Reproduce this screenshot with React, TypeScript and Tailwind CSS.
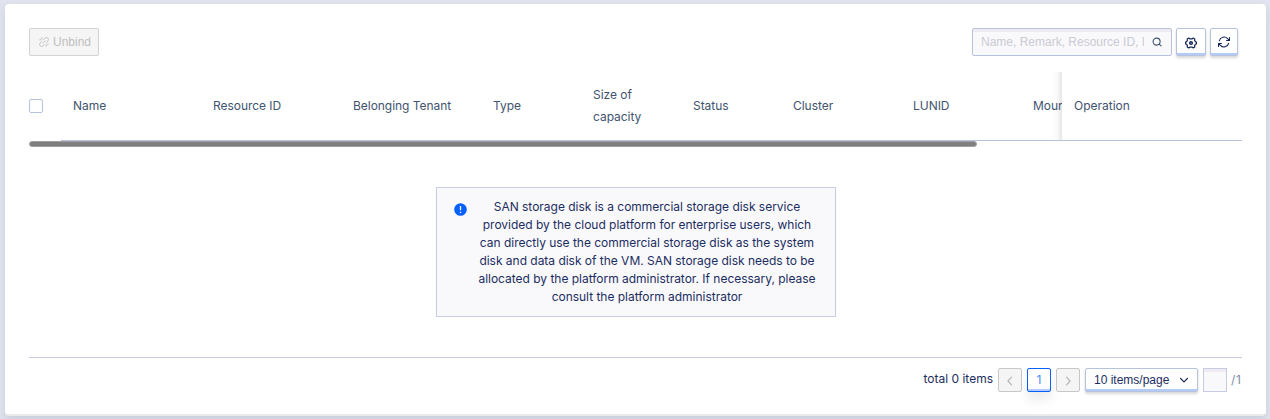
import React from 'react';

const columns = [
  { title: 'Name', width: 'w-[140px]' },
  { title: 'Resource ID', width: 'w-[140px]' },
  { title: 'Belonging Tenant', width: 'w-[140px]' },
  { title: 'Type', width: 'w-[100px]' },
  { title: 'Size of capacity', width: 'w-[100px]' },
  { title: 'Status', width: 'w-[100px]' },
  { title: 'Cluster', width: 'w-[120px]' },
  { title: 'LUNID', width: 'w-[120px]' },
  { title: 'Mount', width: 'w-[120px]' },
];

function UnbindIcon() {
  return (
    <svg width="10" height="10" viewBox="0 0 10 10" fill="none" stroke="currentColor" strokeWidth="1" strokeLinecap="round">
      <path d="M4.6 2.6 6 1.2a1.9 1.9 0 0 1 2.8 2.8L7.4 5.4M5.4 7.4 4 8.8A1.9 1.9 0 0 1 1.2 6L2.6 4.6M4 6l2-2M2.8.8v1.1M.8 2.8h1.1M7.2 9.2V8.1M9.2 7.2H8.1" />
    </svg>
  );
}

function SearchIcon() {
  return (
    <svg width="12" height="12" viewBox="0 0 12 12" fill="none" stroke="#41546f" strokeWidth="1.1" strokeLinecap="round">
      <circle cx="5.6" cy="5.6" r="3.5" />
      <path d="m8.4 8.4 1.7 1.5" />
    </svg>
  );
}

function GearIcon() {
  return (
    <svg width="12" height="12" viewBox="0 0 12 12" fill="none" stroke="#14265a" strokeWidth="1.2" strokeLinejoin="round">
      <path d="M3.8 1 5 1.9H7L8.2 1 9.8 1.9 9.6 3.4 10.4 4.6 11.5 5.2V6.8L10.4 7.4 9.6 8.6 9.8 10.1 8.2 11 7 10.1H5L3.8 11 2.2 10.1 2.4 8.6 1.6 7.4.5 6.8V5.2L1.6 4.6 2.4 3.4 2.2 1.9z" />
      <circle cx="6" cy="6" r="1.3" strokeWidth="1.5" />
    </svg>
  );
}

function RefreshIcon() {
  return (
    <svg width="12" height="12" viewBox="0 0 12 12" fill="none" stroke="#14265a" strokeWidth="1.1" strokeLinecap="round" strokeLinejoin="round">
      <path d="M1.3 4.8A4.8 4.8 0 0 1 9.6 2.7l1.7 1.7M11.5 1.6v2.9H8.6M10.7 7.2A4.8 4.8 0 0 1 2.4 9.3L.7 7.6M.5 10.4V7.5h2.9" />
    </svg>
  );
}

function Chevron({ d }: { d: string }) {
  return (
    <svg width="12" height="12" viewBox="0 0 12 12" fill="none" stroke="currentColor" strokeWidth="1.2" strokeLinecap="round" strokeLinejoin="round">
      <path d={d} />
    </svg>
  );
}

export default function App() {
  return (
    <div className="h-[419px] overflow-hidden bg-[#e1e4ee] pt-1 pl-[5px] font-['Inter',sans-serif] text-xs text-[#1c2d60]">
      <main className="flex h-[412px] w-[1261px] flex-col rounded border-b-2 border-[#ebebeb] bg-white px-6 pt-6 shadow-[0_4px_8px_rgba(20,38,90,0.12)]">
        <div className="flex h-7 items-center justify-between pr-1 font-['Liberation_Sans',sans-serif]">
          <button className="flex h-7 w-[70px] items-center gap-1 rounded-[2px] border border-[#d3d3d3] bg-[#f5f5f5] pl-[9px] text-[#c0c0c0]">
            <UnbindIcon />
            Unbind
          </button>
          <div className="flex gap-1">
            <div className="flex h-7 w-[200px] items-center rounded-[2px] border border-[#b6c3dc] bg-[#f9f9fc] pl-2 shadow-[inset_0_3px_0_#eeebf2]">
              <span className="w-[163px] overflow-hidden whitespace-nowrap text-[#cacad3]">Name, Remark, Resource ID, IP</span>
              <span className="ml-[7px]"><SearchIcon /></span>
            </div>
            <button className="flex h-7 w-[30px] items-center justify-center rounded-[2px] border border-[#b6c3dc] bg-white pt-px shadow-[inset_0_-2px_0_#b2cbfa,0_2px_3px_rgba(0,0,0,0.16)]">
              <GearIcon />
            </button>
            <button className="flex h-7 w-7 items-center justify-center rounded-[2px] border border-[#b6c3dc] bg-white pb-px shadow-[inset_0_-2px_0_#b2cbfa,0_2px_3px_rgba(0,0,0,0.16)]">
              <RefreshIcon />
            </button>
          </div>
        </div>

        <div className="mt-4 flex h-[69px] w-[1213px] text-[#41546f]">
          <div className="flex w-8 shrink-0 items-center pb-px">
            <span className="h-3.5 w-3.5 rounded-[2px] border border-[#b6c3dc]" />
          </div>
          <div className="flex w-[1001px] shrink-0 overflow-hidden border-b border-[#b6c3dc] leading-[22px] tracking-[-0.04px]">
            {columns.map((c) => (
              <div key={c.title} className={`flex shrink-0 items-center pr-3 pl-3 ${c.width}`}>
                {c.title}
              </div>
            ))}
          </div>
          <div className="-ml-2.5 mb-px w-2.5 shrink-0 bg-linear-to-r from-transparent via-black/2 to-black/10" />
          <div className="flex flex-1 items-center border-b border-[#b6c3dc] bg-white pl-3">Operation</div>
        </div>
        <div className="h-1.5 w-[948px] shrink-0 rounded-full border border-[#a0a0a0] bg-[#808080]" />

        <div className="mt-10 ml-[407px] flex h-[130px] w-[400px] shrink-0 border border-[#c8cbe4] bg-[#f9f9fc] pt-[10px] pl-[17px]">
          <svg className="mt-[5px] shrink-0" width="13" height="13" viewBox="0 0 13 13">
            <circle cx="6.5" cy="6.5" r="6.3" fill="#0560ff" />
            <path d="M6.5 3v4.3M6.5 8.7v1.2" stroke="#fff" strokeWidth="1.3" />
          </svg>
          <p className="ml-2 w-[344px] text-center leading-[18px] tracking-[-0.02px] whitespace-nowrap">
            SAN storage disk is a commercial storage disk service<br />
            provided by the cloud platform for enterprise users, which<br />
            can directly use the commercial storage disk as the system<br />
            disk and data disk of the VM. SAN storage disk needs to be<br />
            allocated by the platform administrator. If necessary, please<br />
            consult the platform administrator
          </p>
        </div>

        <div className="mt-10 flex w-[1213px] justify-end border-t border-[#c8cbe0] pt-[10px]">
          <span className="mr-[5px] pt-[3px] leading-4">total 0 items</span>
          <button className="mr-[5px] flex h-6 w-6 items-center justify-center rounded-[2px] border border-[#c8c8c8] bg-[#f5f5f5] pt-px text-[#b5b5b5]">
            <Chevron d="M7.5 2.2 3.9 6l3.6 3.8" />
          </button>
          <button className="mr-[5px] flex h-6 w-6 items-center justify-center rounded-[2px] border border-[#0560ff] bg-white text-[#428cff] shadow-[inset_0_-2px_0_#b2cbfa,0_8px_12px_rgba(0,0,0,0.08)]">1</button>
          <button className="mr-[5px] flex h-6 w-6 items-center justify-center rounded-[2px] border border-[#c8c8c8] bg-[#f5f5f5] pt-px text-[#b5b5b5]">
            <Chevron d="M4.5 2.2 8.1 6 4.5 9.8" />
          </button>
          <button className="mr-[5px] flex h-6 w-[113px] items-center justify-between rounded-[2px] border border-[#b6c3dc] bg-white pr-[7px] pl-2 font-['Liberation_Sans',sans-serif] shadow-[inset_0_-2px_0_#b2cbfa,0_2px_3px_rgba(0,0,0,0.16)]">
            10 items/page
            <Chevron d="M2.6 4.5 6 7.9l3.4-3.4" />
          </button>
          <span className="mr-1 h-6 w-6 border border-[#c8cbe4] bg-[#f9f9fc] shadow-[inset_0_3px_0_#eeebf2]" />
          <span className="w-[11px] pt-1 leading-4 tracking-[0.8px] text-[#7e8da8]">/1</span>
        </div>
      </main>
    </div>
  );
}
